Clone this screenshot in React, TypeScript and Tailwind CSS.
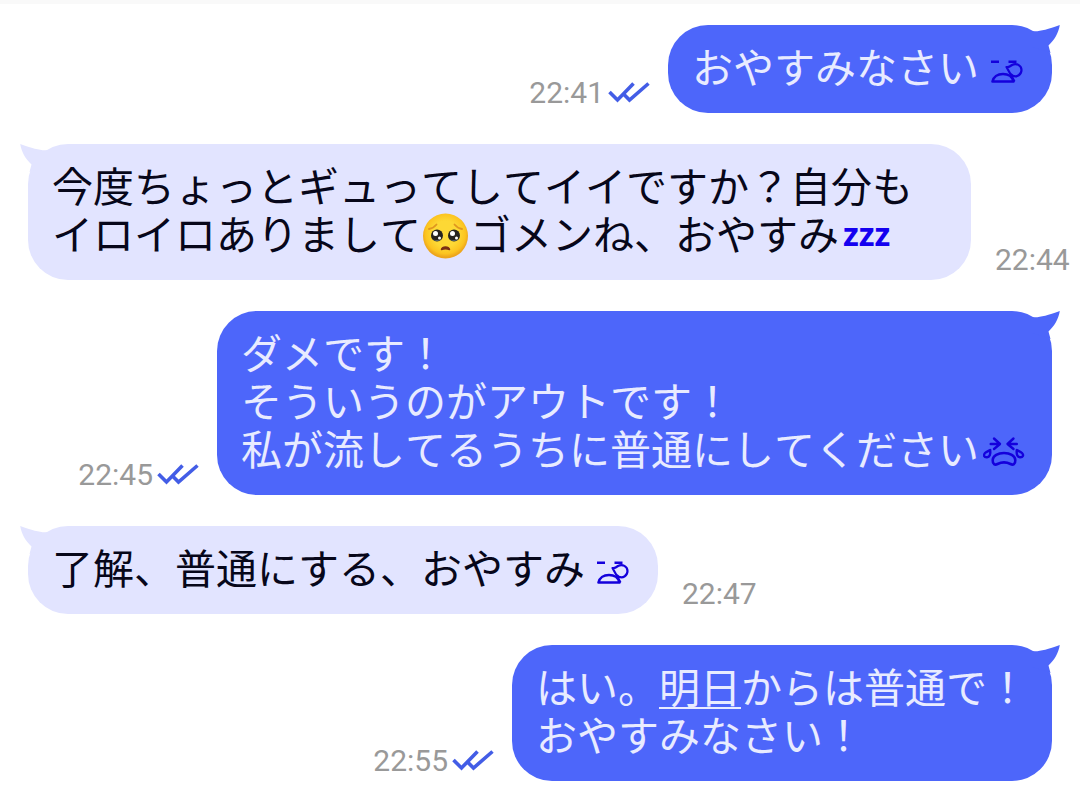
import React from 'react';
import { clsx } from 'clsx';

interface Message {
  id: number;
  time: string;
  outgoing: boolean;
  content: React.ReactNode;
}

const SleepyFace = () => (
  <svg
    role="img"
    aria-label="😪"
    viewBox="0 -4 49 48"
    className="inline-block h-12 w-[49px] align-top"
    fill="none"
    stroke="#1400dc"
    strokeWidth="2.200"
    strokeLinejoin="round"
  >
    <path d="M12 16.800h8M29.500 16.800h8" strokeWidth="2.600" />
    <path d="M13.500 36.500C14.500 32 18.500 29 24 29C29.500 29 33.500 32 34.500 36.500Z" strokeWidth="2.600" />
    <path d="M35.500 36.500L27.500 22C29.500 22.500 31 21.500 33 20C37.500 17.500 42.500 20.500 42.500 25C42.500 29.500 38 32.500 34 30.800C31.500 29.500 30.500 28 30 26.500" />
  </svg>
);

const CryingFace = () => (
  <svg
    role="img"
    aria-label="😭"
    viewBox="0 -8 49 48"
    className="inline-block h-12 w-[49px] align-top"
    fill="none"
    stroke="#1400dc"
    strokeWidth="2.400"
    strokeLinecap="round"
    strokeLinejoin="round"
  >
    <path d="M15 7.500L21 13L15 18M11.700 13H20" />
    <path d="M34.500 7.500L28.500 13L34.500 18M37.800 13H29.500" />
    <path d="M11.200 19C11.800 23.500 10.500 26 8 26.300C5 26.500 4 24 6 22C7.500 20.500 9 20.500 11.200 19Z" />
    <path d="M37.800 19C37.200 23.500 38.500 26 41 26.300C44 26.500 45 24 43 22C41.500 20.500 40 20.500 37.800 19Z" />
    <path
      d="M25 22C19 22 14 24.500 13.700 29C13.500 33.500 16 34.300 18.500 33C22.500 31 27.500 31 31.500 33C34 34.300 36.500 33.500 36.300 29C36 24.500 31 22 25 22Z"
      strokeWidth="2.600"
    />
  </svg>
);

const PleadingFace = () => (
  <svg
    role="img"
    aria-label="🥺"
    viewBox="0 -4 49 48"
    className="inline-block h-12 w-[49px] overflow-visible align-top"
  >
    <defs>
      <radialGradient id="face" cx="50%" cy="45%" r="52%">
        <stop offset="0.55" stopColor="#fdd835" />
        <stop offset="0.85" stopColor="#fcc420" />
        <stop offset="1" stopColor="#eda51c" />
      </radialGradient>
    </defs>
    <circle cx="24.500" cy="24" r="22.500" fill="url(#face)" />
    <path d="M8 17C11 16.500 13.500 15 15.500 12.500M41 17C38 16.500 35.500 15 33.500 12.500" fill="none" stroke="#e0961f" strokeWidth="1.800" strokeLinecap="round" />
    <circle cx="16" cy="23.500" r="6" fill="#26231f" />
    <circle cx="33" cy="23.500" r="6" fill="#26231f" />
    <path d="M12 27a5 5 0 0 0 8 0a6 6 0 0 1-8 0M29 27a5 5 0 0 0 8 0a6 6 0 0 1-8 0" fill="#8fb4c8" />
    <circle cx="14.500" cy="21.500" r="2.500" fill="#fff" />
    <circle cx="31.500" cy="21.500" r="2.500" fill="#fff" />
    <circle cx="18.500" cy="26" r="1.500" fill="#fff" />
    <circle cx="35.500" cy="26" r="1.500" fill="#fff" />
    <path d="M20.500 37.500C21.500 34 27.500 34 28.500 37.500C26 36.500 23 36.500 20.500 37.500Z" fill="#7a2f14" stroke="#7a2f14" strokeWidth="1.500" strokeLinejoin="round" />
  </svg>
);

const Snore = () => (
  <span className="inline-block h-12 w-[49px] pl-1 align-top font-['Noto_Sans',sans-serif] text-[32px] leading-[52px] font-bold text-[#1400f0]">
    zzz
  </span>
);

const ReadMark = () => (
  <svg
    role="img"
    aria-label="既読"
    viewBox="0 0 42 24"
    className="mr-[18px] ml-1 h-6 w-[42px] shrink-0"
    fill="none"
    stroke="#435de6"
    strokeWidth="3.600"
  >
    <path d="M1.500 11L9.500 19L25.500 2.500" />
    <path d="M15.500 13L21.500 19L40.500 2.500" />
  </svg>
);

const Tail: React.FC<{ outgoing: boolean }> = ({ outgoing }) => (
  <svg
    aria-hidden="true"
    viewBox="0 0 30 28"
    className={clsx(
      'absolute top-0 h-7 w-[30px]',
      outgoing ? '-right-2 text-[#4d66fa]' : '-left-2 -scale-x-100 text-[#e2e4ff]'
    )}
  >
    <path d="M2 6C8 7 16 5 29.800 0C28.500 8 24.500 15 18.500 20.500L20.500 28L2 22Z" fill="currentColor" />
  </svg>
);

const messages: Message[] = [
  {
    id: 1,
    time: '22:41',
    outgoing: true,
    content: <>おやすみなさい<SleepyFace /></>,
  },
  {
    id: 2,
    time: '22:44',
    outgoing: false,
    content: <>今度ちょっとギュってしてイイですか？自分もイロイロありまして<PleadingFace />ゴメンね、おやすみ<Snore /></>,
  },
  {
    id: 3,
    time: '22:45',
    outgoing: true,
    content: <>ダメです！<br />そういうのがアウトです！<br />私が流してるうちに普通にしてください<CryingFace /></>,
  },
  {
    id: 4,
    time: '22:47',
    outgoing: false,
    content: <>了解、普通にする、おやすみ<SleepyFace /></>,
  },
  {
    id: 5,
    time: '22:55',
    outgoing: true,
    content: <>はい。<a href="#tomorrow" className="underline decoration-2 underline-offset-4">明日</a>からは普通で！<br />おやすみなさい！</>,
  },
];

const MessageRow: React.FC<{ message: Message }> = ({ message }) => {
  const { outgoing, time, content } = message;

  return (
    <li className={clsx('flex items-end', outgoing ? 'justify-end pr-7' : 'pl-7')}>
      {outgoing && (
        <div className="flex shrink-0 items-center pb-1">
          <time className="font-[Roboto,sans-serif] text-[30px] leading-8 text-[#999]">{time}</time>
          <ReadMark />
        </div>
      )}
      <div
        className={clsx(
          'relative max-w-[943px] rounded-[40px] px-6 pt-4 pb-6',
          outgoing ? 'bg-[#4d66fa] text-[#e8ebff]' : 'bg-[#e2e4ff] text-[#07071a]'
        )}
      >
        <Tail outgoing={outgoing} />
        <p className="relative text-[41px] leading-[48px] [font-kerning:none]">{content}</p>
      </div>
      {!outgoing && (
        <time className="ml-6 shrink-0 pb-1 font-[Roboto,sans-serif] text-[30px] leading-8 text-[#999]">{time}</time>
      )}
    </li>
  );
};

export default function App() {
  return (
    <main
      lang="ja"
      className="min-h-screen border-t-4 border-[#f9f9f9] bg-white pt-[21px] pb-[30px] font-['Noto_Sans_CJK_JP',sans-serif]"
    >
      <ol className="flex flex-col gap-[31px]">
        {messages.map((message) => (
          <MessageRow key={message.id} message={message} />
        ))}
      </ol>
    </main>
  );
}
